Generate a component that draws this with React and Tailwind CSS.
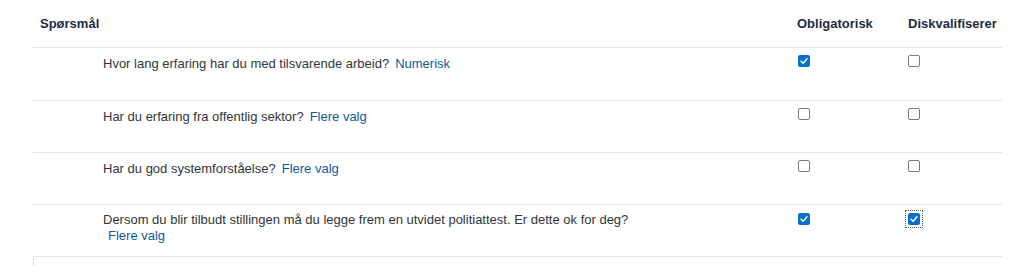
import React from 'react';

const rows = [
  { q: 'Hvor lang erfaring har du med tilsvarende arbeid?', type: 'Numerisk', req: true, disq: false, h: 'h-[53px]' },
  { q: 'Har du erfaring fra offentlig sektor?', type: 'Flere valg', req: false, disq: false, h: 'h-[52px]' },
  { q: 'Har du god systemforståelse?', type: 'Flere valg', req: false, disq: false, h: 'h-[52px]' },
  {
    q: 'Dersom du blir tilbudt stillingen må du legge frem en utvidet politiattest. Er dette ok for deg?',
    type: 'Flere valg',
    req: true,
    disq: true,
    focus: true,
    wrap: true,
    h: 'h-[52px]',
  },
];

function Box({ checked }) {
  if (checked) {
    return (
      <span className="flex h-[12px] w-[12px] items-center justify-center rounded-[2px] bg-[#0a6ed1]">
        <svg viewBox="0 0 12 12" className="h-[10px] w-[10px]">
          <path d="M2.5 6.2 L5 8.6 L9.6 3.4" fill="none" stroke="#fff" strokeWidth="1.8" strokeLinecap="round" strokeLinejoin="round" />
        </svg>
      </span>
    );
  }
  return <span className="block h-[12px] w-[12px] rounded-[2px] border border-[#7a7d80] bg-white" />;
}

export default function App() {
  return (
    <div className="h-[266px] w-[1035px] bg-white" style={{ fontFamily: '"Liberation Sans", Arial, sans-serif' }}>
      <div className="ml-[33px] w-[969px]">
        <div className="flex h-[48px] items-center border-b border-[#e5e5e5] text-[13px] font-bold text-[#1d2d3e]">
          <div className="w-[764px] pl-[7px]">Spørsmål</div>
          <div className="w-[111px]">Obligatorisk</div>
          <div>Diskvalifiserer</div>
        </div>
        {rows.map((r, i) => (
          <div key={i} className={`flex items-start border-b border-[#e5e5e5] text-[13px] text-[#32363a] ${r.h}`}>
            <div className={`w-[765px] pl-[70px] leading-[16px] ${r.wrap ? 'pt-[7px]' : 'pt-[8px]'}`}>
              {r.wrap ? (
                <>
                  <div>{r.q}</div>
                  <div className="pl-[5px] text-[#0b5c99]">{r.type}</div>
                </>
              ) : (
                <span>
                  {r.q}
                  <span className="ml-[6px] text-[#0b5c99]">{r.type}</span>
                </span>
              )}
            </div>
            <div className={`flex w-[110px] ${r.wrap ? 'pt-[8px]' : 'pt-[7px]'}`}>
              <Box checked={r.req} />
            </div>
            {r.focus ? (
              <div className="ml-[-2px] flex pt-[6px]">
                <span className="flex p-[2px] outline-1 outline-dotted outline-[#555]">
                  <Box checked={r.disq} />
                </span>
              </div>
            ) : (
              <div className="flex pt-[7px]">
                <Box checked={r.disq} />
              </div>
            )}
          </div>
        ))}
        <div className="h-[10px] w-px bg-[#e5e5e5]" />
      </div>
    </div>
  );
}
